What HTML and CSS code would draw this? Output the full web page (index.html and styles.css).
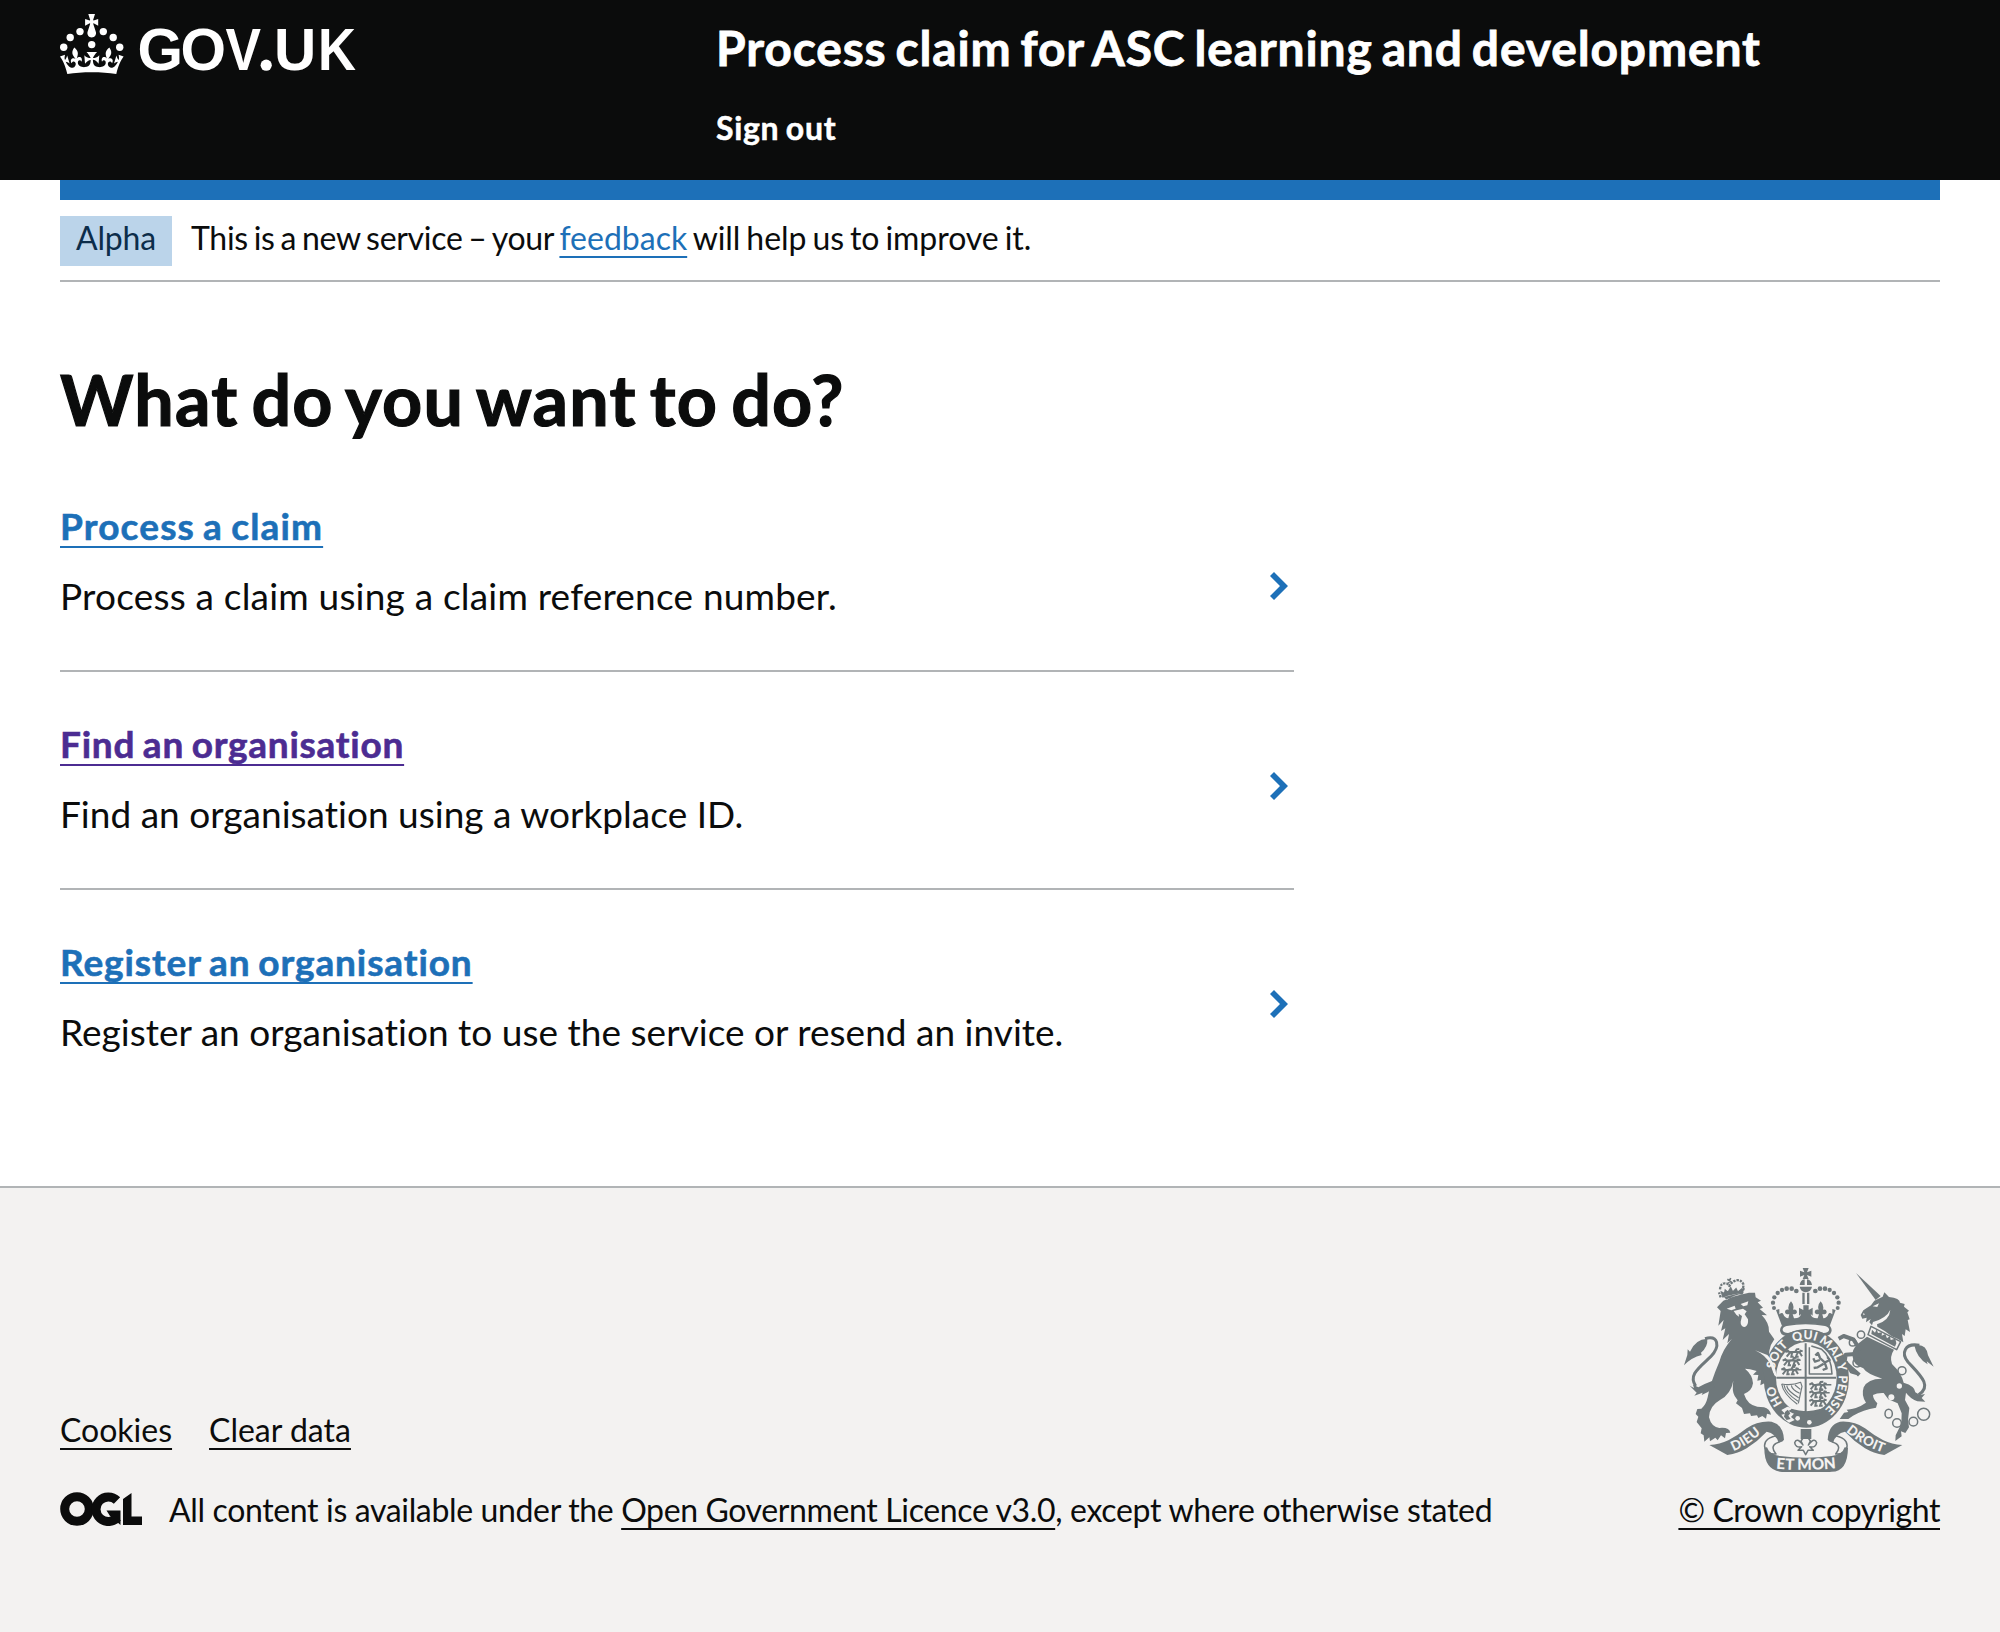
FILE: index.html
```html
<!DOCTYPE html>
<html lang="en">
<head>
<meta charset="utf-8">
<title>What do you want to do?</title>
<link rel="stylesheet" href="styles.css">
</head>
<body>
<header class="header">
  <div class="header-inner">
    <a class="logo" href="#" aria-label="GOV.UK">
      <svg class="logo-svg" viewBox="0 0 324 60" fill="currentColor">
        <circle cx="20" cy="17.6" r="3.7"/><circle cx="10.2" cy="23.5" r="3.7"/><circle cx="3.7" cy="33.2" r="3.7"/><circle cx="31.7" cy="30.6" r="3.7"/><circle cx="43.3" cy="17.6" r="3.7"/><circle cx="53.2" cy="23.5" r="3.7"/><circle cx="59.7" cy="33.2" r="3.7"/>
        <path d="M33.1,9.8c.2-.1.3-.3.5-.5l4.6,2.4v-6.8l-4.6,1.5c-.1-.2-.3-.3-.5-.5l1.9-5.9h-6.7l1.9,5.9c-.2.1-.3.3-.5.5l-4.6-1.5v6.8l4.6-2.4c.1.2.3.3.5.5l-2.6,8c-.9,2.8,1.2,5.7,4.1,5.7h0c3,0,5.1-2.9,4.1-5.7l-2.6-8ZM37,37.9s-3.4,3.8-4.1,6.1c2.2,0,4.2-.5,6.4-2.8l-.7,8.5c-2-2.8-4.4-4.1-5.7-3.8.1,3.1.5,6.7,5.8,7.2,3.7.3,6.7-1.5,7-3.8.4-2.6-2-4.3-3.7-1.6-1.4-4.5,2.4-6.1,4.9-3.2-1.9-4.5-1.8-7.7,2.4-10.9,3,4,2.6,7.3-1.2,11.1,2.4-1.3,6.2,0,4,4.6-1.2-2.8-3.7-2.2-4.2.2-.3,1.7.7,3.7,3,4.2,1.9.3,4.7-.9,7-5.9-1.3,0-2.4.7-3.9,1.7l2.4-8c.6,2.3,1.4,3.7,2.2,4.5.6-1.6.5-2.8,0-5.3l5,1.8c-2.6,3.6-5.2,8.7-7.3,17.5-7.4-1.1-15.7-1.7-24.5-1.7h0c-8.8,0-17.1.6-24.5,1.7-2.1-8.9-4.7-13.9-7.3-17.5l5-1.8c-.5,2.5-.6,3.7,0,5.3.8-.8,1.6-2.3,2.2-4.5l2.4,8c-1.5-1-2.6-1.7-3.9-1.7,2.3,5,5.2,6.2,7,5.9,2.3-.4,3.3-2.4,3-4.2-.5-2.4-3-3.1-4.2-.2-2.2-4.6,1.6-6,4-4.6-3.7-3.7-4.2-7.1-1.2-11.1,4.2,3.2,4.3,6.4,2.4,10.9,2.5-2.8,6.3-1.3,4.9,3.2-1.8-2.7-4.1-1-3.7,1.6.3,2.3,3.3,4.1,7,3.8,5.4-.5,5.7-4.2,5.8-7.2-1.3-.2-3.7,1-5.7,3.8l-.7-8.5c2.2,2.3,4.2,2.7,6.4,2.8-.7-2.3-4.1-6.1-4.1-6.1h10.6Z"/>
        <text class="wordmark" x="77.5 120.500" y="56">GO</text>
        <text class="wordmark" x="165.500" y="56" textLength="35.500" lengthAdjust="spacingAndGlyphs">V</text>
        <circle cx="206.2" cy="51.2" r="5.6"/>
        <text class="wordmark" x="214" y="56">U</text>
        <text class="wordmark" x="258" y="56" textLength="38" lengthAdjust="spacingAndGlyphs">K</text>
      </svg>
    </a>
    <div class="header-content">
      <a class="service-name" href="#">Process claim for ASC learning and development</a>
      <a class="sign-out" href="#">Sign out</a>
    </div>
  </div>
</header>

<div class="container">
  <div class="phase-banner">
    <strong class="tag">Alpha</strong>
    <span class="phase-text"><span class="phase-start">This is a new service – your </span><a class="link feedback" href="#">feedback</a><span class="phase-end"> will help us to improve it.</span></span>
  </div>
  <main class="main">
    <h1 class="title">What do you want to do?</h1>
    <ul class="tasks">
      <li class="task">
        <div class="task-body"><a class="link task-link process" href="#">Process a claim</a><p class="task-text wide">Process a claim using a claim reference number.</p></div>
        <svg class="chevron" viewBox="0 0 18 28"><path d="M4 0 18 14 4 28 0 24 10 14 0 4Z"/></svg>
      </li>
      <li class="task">
        <div class="task-body"><a class="link task-link visited" href="#">Find an organisation</a><p class="task-text">Find an organisation using a workplace ID.</p></div>
        <svg class="chevron" viewBox="0 0 18 28"><path d="M4 0 18 14 4 28 0 24 10 14 0 4Z"/></svg>
      </li>
      <li class="task">
        <div class="task-body"><a class="link task-link register" href="#">Register an organisation</a><p class="task-text">Register an organisation to use the service or resend an invite.</p></div>
        <svg class="chevron" viewBox="0 0 18 28"><path d="M4 0 18 14 4 28 0 24 10 14 0 4Z"/></svg>
      </li>
    </ul>
  </main>
</div>

<footer class="footer">
  <div class="footer-inner">
    <div class="footer-meta">
      <nav class="footer-nav"><a class="footer-link" href="#">Cookies</a><a class="footer-link" href="#">Clear data</a></nav>
      <div class="licence">
        <svg class="ogl" viewBox="0 0 82 34" role="img" aria-label="Open Government Licence">
          <circle cx="17" cy="17" r="12.3" fill="none" stroke="currentColor" stroke-width="9"/>
          <path d="M57 8.5A12.3 12.3 0 1 0 57.500 25.500" fill="none" stroke="currentColor" stroke-width="9"/>
          <path d="M46.500 18.500H60.500V33L56 29 50 24Z M63 7 71.500 1V24.500H82V33H63Z" fill="currentColor"/>
        </svg>
        <span class="licence-text"><span class="lt-start">All content is available under the </span><a class="footer-link lt-link" href="#">Open Government Licence v3.0</a><span class="lt-end">, except where otherwise stated</span></span>
      </div>
    </div>
    <div class="copyright">
      <svg class="crest" viewBox="42 24 750 612">
        <defs>
          <path id="garter" d="M409 468A97 115 0 0 1 409 238A97 115 0 0 1 409 468"/>
          <path id="motto-left" d="M172 579Q225 566 288 507"/>
          <path id="motto-right" d="M515 503Q575 560 656 583"/>
          <path id="motto-mid" d="M305 625Q407 635 512 623"/>
          <g id="leopard" fill="none" stroke-width="6"><path d="M0 6 8 2 14 8 30 5 42 8 46 2 52 4M12 10 4 20M20 9 18 20 25 20M36 9 32 20 40 20M44 9 50 19M30 5 34-2 42-3"/></g>
        </defs>
        <g class="ink">
          <path d="M398 24H416L411 37 424 32V50L411 45 416 57H398L403 45 390 50V32L403 37Z"/>
          <path d="M389 75Q391 60 404 58V75ZM411 75V58Q424 60 426 75ZM389 80H426Q423 95 407 97 392 95 389 80Z"/>
          <path d="M397 98H404V132H397ZM411 98H418V132H411Z"/>
          <g>
            <circle cx="379" cy="93" r="7"/><circle cx="365" cy="86" r="7"/><circle cx="350" cy="86" r="7"/><circle cx="336" cy="90" r="6.500"/><circle cx="323" cy="99" r="6.500"/><circle cx="313" cy="112" r="6.500"/><circle cx="309" cy="128" r="6.500"/><circle cx="312" cy="144" r="6"/>
            <circle cx="436" cy="93" r="7"/><circle cx="450" cy="86" r="7"/><circle cx="465" cy="86" r="7"/><circle cx="479" cy="90" r="6.500"/><circle cx="492" cy="99" r="6.500"/><circle cx="502" cy="112" r="6.500"/><circle cx="506" cy="128" r="6.500"/><circle cx="503" cy="144" r="6"/>
          </g>
          <path d="M318 150 328 147V163Q337 155 340 163 344 174 355 175L358 163Q345 164 345 155 346 147 356 149 352 136 363 124 374 136 369 149 380 147 381 156 380 164 368 163L372 175Q390 176 393 162L387 167V143L400 150V136H416V150L428 143V167L422 162Q425 176 443 175L447 163Q435 164 434 156 435 147 446 149 441 136 452 124 463 136 459 149 469 147 470 155 470 164 457 163L460 175Q471 174 475 163 478 155 487 163V147L497 150 479 198Q407 182 336 198Z"/>
          <path fill-rule="evenodd" d="M346 193Q407 184 469 193 484 196 485 211 484 226 468 228H348Q331 226 330 211 331 196 346 193ZM350 198Q336 202 338 211 341 219 354 219 407 200 461 219 474 219 477 211 479 202 465 198 407 188 350 198Z"/>
          <ellipse cx="409" cy="355" rx="128" ry="148"/>
          <path d="M170 120Q195 103 217 103L220 97 162 111ZM160 122Q190 107 237 98H255L257 112 273 122 263 127 279 143 269 147 291 166 275 165Q299 190 297 215L313 238Q288 270 302 315 321 335 318 355L314 376 303 382 296 374 287 378 283 370 271 376 273 360 262 362 265 345 249 344 260 333 240 328 225 326Q248 345 249 370 246 393 222 402 232 435 262 440L282 442Q299 446 303 464L291 461 288 476 277 468 265 474 261 466 243 468 240 460 222 462 216 444 198 430 203 421 194 408Q185 392 190 362 183 402 150 420 118 438 117 472 124 501 148 504 178 501 181 518L168 519 165 535 153 526 143 541 136 533 120 544 118 532 103 545 101 526 92 520 95 505 80 486 85 470 77 462 82 447 94 446Q108 435 113 412 120 370 148 305 158 268 186 236L172 250 177 222 158 240 166 205 153 213 161 180 145 197 152 153 141 142Z"/>
          <path d="M42 316 52 285 53 268 60 275Q75 238 112 236 114 260 93 278L95 285Q65 292 42 316Z"/>
          <path d="M59 377 72 384 69 374 85 382Q105 370 128 362L133 382Q115 398 95 405L98 398 73 407 80 398Z"/>
          <path d="M105 236C145 225 152 258 122 290 85 325 55 345 77 378" class="line tail"/>
          <path d="M152 112 147 97M215 100 222 84" class="line dots"/>
          <path d="M150 88Q152 70 163 70 173 69 178 78 184 66 198 61 214 58 221 74L217 94" class="line dots"/>
          <path d="M159 110 155 97 164 101 166 91 174 98 182 84 188 97 198 87 203 97 215 88 217 98Q185 99 159 110ZM172 58 184 65M182 54 176 69" stroke-width="5"/>
          <path d="M558 39 632 108 617 120Z"/>
          <path d="M572 165 580 151 603 136 613 122 638 110 643 97 657 111Q690 115 690 128L704 132 702 140 717 152 712 157 719 178 713 180 720 216 707 208 704 228 696 222 700 247 684 237 665 229 645 214 622 200 621 193Q659 180 661 149 650 174 609 186L606 196 598 187 602 177 588 187 590 173 577 176Z"/>
          <path class="line thin" d="M603 199 692 245 680 269 594 224Z"/>
          <path d="M604 222 606 209 615 218 620 208 624 219 636 217 635 227 646 222 651 235 660 228 662 240 676 236 679 250 675 260Z"/>
          <path d="M591 230 672 269Q658 290 666 312 695 340 701 368 735 378 736 397L750 405 765 402 755 414 766 425 742 424Q720 415 708 398L705 420 718 444 714 480 717 502 706 519 693 514 695 529 676 543 677 526 694 491 695 460 683 430 655 418 641 399Q621 398 609 405 609 417 622 430L618 443Q580 449 549 467L535 477H509L522 458 535 456 530 449Q561 447 588 428 573 407 581 382 594 355 637 356 590 342 580 325 550 315 548 290 543 270 566 250Z"/>
          <path class="line leg" d="M571 270 550 238 521 228 506 236M565 281 527 284 524 305 543 323 568 345M527 305 545 335 563 340"/>
          <path class="line tail" d="M748 256C703 248 693 280 714 306 750 345 788 378 746 404"/>
          <path d="M733 256Q769 249 774 286L791 320 770 304 773 313Q740 294 733 256Z"/>
          <g class="line thin">
            <circle cx="573" cy="224" r="11"/><circle cx="548" cy="248" r="10"/><circle cx="562" cy="308" r="13"/><circle cx="696" cy="332" r="12"/><ellipse cx="656" cy="461" rx="11" ry="13"/><circle cx="681" cy="489" r="13"/><circle cx="730" cy="485" r="13"/><circle cx="761" cy="463" r="18"/>
          </g>
          <path d="M118 555Q150 553 175 541 205 525 230 505 262 482 305 485 340 494 342 540L326 548Q317 520 290 515 263 544 230 565 205 580 172 585ZM697 555Q665 553 640 541 610 525 585 505 553 482 510 485 475 494 473 540L489 548Q498 520 525 515 552 544 585 565 610 580 643 585Z"/>
          <path d="M291 562Q298 584 330 588 407 598 485 588 517 584 524 562L534 563Q533 635 485 635 407 642 330 635 282 628 283 563Z"/>
          <path class="line thin" d="M329 526Q280 532 284 561 290 585 318 582 300 561 318 550L339 541M486 526Q535 532 531 561 525 585 497 582 515 561 497 550L476 541"/>
          <path d="M392 507H424V537H392Z"/>
          <path class="line thin" d="M407 523 421 543 415 555Q434 530 440 548 438 564 419 560L430 571H414L407 584 400 571H384L395 560Q376 564 374 548 380 530 399 555L393 543Z"/>
        </g>
        <g class="paper">
          <ellipse cx="409" cy="353" rx="91" ry="107"/>
          <path d="M170 146 194 137 197 146 184 151ZM212 132 235 124 232 136 220 139ZM191 153 219 146 230 154 224 163 234 178Q236 196 225 201 211 200 212 185L216 168 206 161 207 170 199 164Z"/>
          <path d="M608 139 627 130 622 141ZM580 159 585 163 580 166Z"/>
          <circle cx="688" cy="378" r="8"/><circle cx="664" cy="412" r="9"/><circle cx="383" cy="475" r="7"/><circle cx="418" cy="487" r="7"/>
          <path d="M352 440 366 444 361 453 373 460 363 471 374 480 357 488 343 477 334 464 345 461 334 450Z"/>
        </g>
        <g class="ink">
          <path d="M404 250H410V454H404ZM319 350H498V356H319ZM355 453Q409 485 461 453L450 447Q409 460 366 447ZM345 456 353 449 361 460 355 467 362 477 350 480 342 470Z"/>
          <g class="lions"><use href="#leopard" x="346" y="270"/><use href="#leopard" x="338" y="296"/><use href="#leopard" x="334" y="323"/><use href="#leopard" x="418" y="368"/><use href="#leopard" x="418" y="392"/><use href="#leopard" x="418" y="417"/></g>
          <path class="line thin" d="M350 275 392 275M342 301H392M338 329H394M428 374H484M428 398H479M426 422H465"/>
          <path class="line thin" d="M418 262V342H486Q484 290 455 268L424 258"/>
          <path class="line lion-rampant" d="M436 286 444 279 450 294 464 307 470 325 458 330M450 300 435 305 430 295M461 311 443 322 431 324M466 307 479 300 472 291"/>
          <path class="line harp" d="M335 372Q365 378 392 367L396 379 385 430M335 372Q340 402 382 433M350 377Q352 393 386 413M364 376Q366 389 389 400M342 375Q345 398 384 424M375 375 391 388"/>
        </g>
        <path class="paper" d="M255 271Q288 286 301 313L313 348 321 350Q312 302 292 285Z"/>
        <path class="ink" d="M267 285Q300 300 305 332L317 352 314 374 303 382 285 360Z"/>
        <g class="lettering">
          <text><textPath href="#garter" startOffset="17%">HO</textPath></text>
          <text><textPath href="#garter" startOffset="35%">SOIT</textPath></text>
          <text><textPath href="#garter" startOffset="49.3%">QUI</textPath></text>
          <text><textPath href="#garter" startOffset="64%">MAL Y</textPath></text>
          <text><textPath href="#garter" startOffset="82.500%">PENSE</textPath></text>
          <text class="motto"><textPath href="#motto-left" startOffset="50%">DIEU</textPath></text>
          <text class="motto"><textPath href="#motto-right" startOffset="50%">DROIT</textPath></text>
          <text class="et-mon"><textPath href="#motto-mid" startOffset="50%">ET MON</textPath></text>
        </g>
      </svg>
      <a class="footer-link crown-copyright" href="#">© Crown copyright</a>
    </div>
  </div>
</footer>
</body>
</html>
```
FILE: styles.css
```css
* { box-sizing: border-box; }
body { margin: 0; font-family: Lato, "Noto Sans", sans-serif; color: #0b0c0c; background: #fff; font-size: 32px; line-height: 40px; }
h1, p, ul { margin: 0; padding: 0; }
a { color: inherit; text-decoration: none; white-space: nowrap; }

.header { background: #0b0c0c; color: #fff; height: 180px; }
.header-inner { display: flex; margin: 0 60px; }
.logo { width: 656px; padding-top: 14px; }
.logo-svg { display: block; width: 324px; height: 60px; overflow: visible; }
.wordmark { font: 700 58.5px "Liberation Sans", Arial, sans-serif; }
.header-content { display: flex; flex-direction: column; align-items: flex-start; gap: 30px; padding-top: 18px; }
.service-name { font-size: 48px; line-height: 60px; font-weight: 700; letter-spacing: .84px; word-spacing: -3.5px; -webkit-text-stroke: .8px; }
.sign-out { font-weight: 700; letter-spacing: .7px; word-spacing: -2px; -webkit-text-stroke: .5px; }

.container { margin: 0 60px; border-top: 20px solid #1d70b8; }
.phase-banner { display: flex; gap: 19px; height: 82px; padding-top: 16px; border-bottom: 2px solid #b1b4b6; line-height: 43px; }
.tag { width: 112px; height: 50px; padding-left: 16px; background: #bbd4ea; color: #0c2d4a; font-weight: 400; letter-spacing: -.17px; }
.phase-text { white-space: pre; }
.phase-start { letter-spacing: -.3px; word-spacing: -2px; }
.phase-end { letter-spacing: -.08px; word-spacing: -2px; }
.link, .footer-link { text-decoration: underline; text-decoration-thickness: 2px; text-underline-offset: 6px; text-decoration-skip-ink: none; }
.link { color: #1d70b8; }

.main { width: 1234px; padding-top: 73px; padding-bottom: 129px; }
.title { font-size: 70px; line-height: 88px; font-weight: 700; letter-spacing: 1.2px; word-spacing: -5.2px; -webkit-text-stroke: 1.2px; }
.tasks { list-style: none; margin-top: 11px; }
.task { display: flex; justify-content: space-between; padding: 47px 6px 49px 0; border-bottom: 2px solid #b1b4b6; }
.task:last-child { border-bottom: 0; padding-bottom: 0; }
.task-link { display: block; width: fit-content; font-size: 37px; line-height: 50px; font-weight: 700; letter-spacing: .74px; word-spacing: -2px; -webkit-text-stroke: .6px; }
.process { letter-spacing: 1.15px; }
.register { letter-spacing: .9px; }
.visited { color: #4c2c92; }
.task-text { margin-top: 20px; font-size: 37px; line-height: 50px; white-space: nowrap; letter-spacing: .02px; }
.task-text.wide { letter-spacing: .2px; }
.chevron { width: 18px; height: 28px; margin-top: 53px; fill: #1d70b8; }
.task:first-child .chevron { margin-top: 71px; }

.footer { border-top: 2px solid #b1b4b6; background: #f3f2f1; padding: 80px 60px 102px; }
.footer-inner { display: flex; justify-content: space-between; align-items: flex-end; }
.footer-nav { display: flex; gap: 37px; margin-bottom: 40px; }
.licence { display: flex; gap: 27px; }
.ogl { width: 82px; height: 34px; margin-top: 2px; }
.licence-text { white-space: pre; }
.lt-start { letter-spacing: -.35px; }
.lt-link { letter-spacing: -.37px; }
.lt-end { letter-spacing: -.31px; }
.copyright { display: flex; flex-direction: column; align-items: center; gap: 18px; }
.crown-copyright { letter-spacing: -.4px; }
.crest { display: block; width: 250px; height: 204px; }
.ink { fill: #6f787b; stroke: #6f787b; stroke-width: 0; }
.paper { fill: #f3f2f1; }
.line { fill: none; stroke-linejoin: round; }
.thin { stroke-width: 4.5px; }
.tail { stroke-width: 9px; }
.leg { stroke-width: 12px; }
.dots { stroke-width: 7px; stroke-dasharray: 7 3; }
.lion-rampant { stroke-width: 7px; }
.harp { stroke-width: 3.5px; }
.lettering { fill: #f3f2f1; font: 900 37px Lato, sans-serif; text-anchor: middle; }
.motto { font-size: 40px; letter-spacing: 1px; }
.et-mon { font-size: 46px; }
```
